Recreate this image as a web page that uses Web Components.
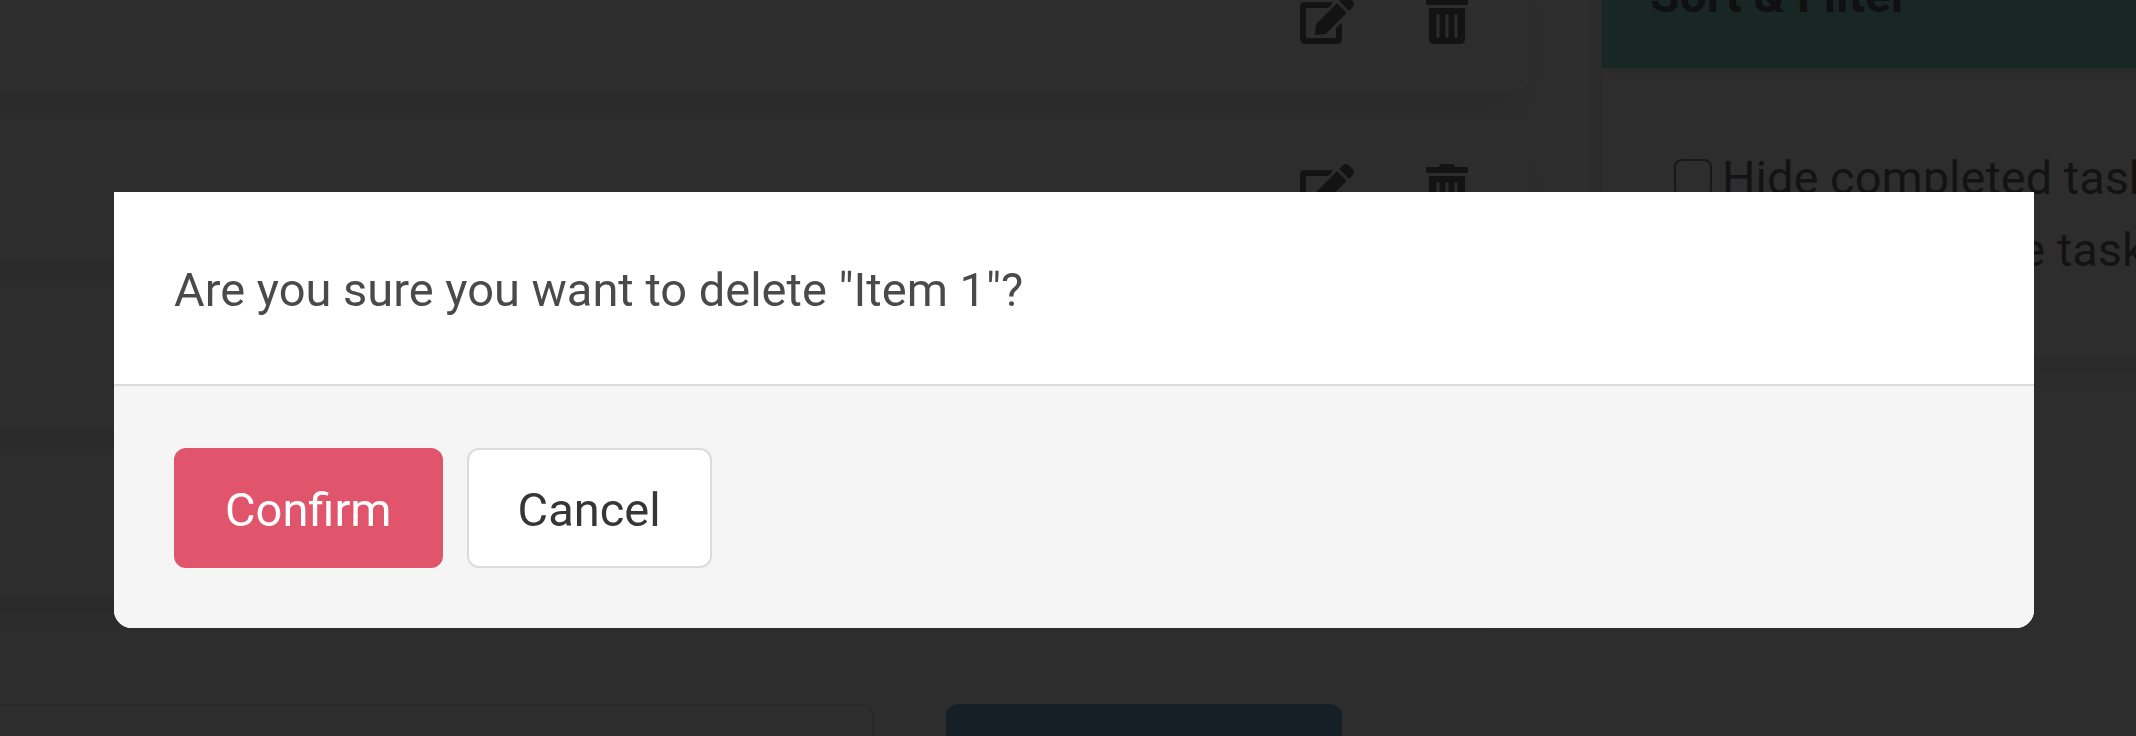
<!DOCTYPE html>
<html lang="en">
<head>
<meta charset="utf-8">
<title>Tasks</title>
<style>
  html, body { margin: 0; height: 100%; overflow: hidden; }
  body {
    font: 400 47px/72px Roboto, "Liberation Sans", sans-serif;
    color: #4a4a4a;
    background: #fff;
    --text-strong: #363636;
    --border: #dbdbdb;
    --shadow: 0 24px 48px -6px rgba(10, 10, 10, .1), 0 0 0 2px rgba(10, 10, 10, .02);
  }
</style>
</head>
<body>
<task-page>
  <task-item></task-item>
  <task-item></task-item>
  <task-item></task-item>
  <task-item></task-item>
  <task-form slot="form"></task-form>
  <filter-card slot="aside">
    <span slot="title">Sort &amp; Filter</span>
    <check-option>Hide completed tasks</check-option>
    <check-option>Show complete tasks</check-option>
  </filter-card>
</task-page>
<confirm-modal>
  <span>Are you sure you want to delete "Item 1"?</span>
  <modal-button slot="actions" kind="danger">Confirm</modal-button>
  <modal-button slot="actions">Cancel</modal-button>
</confirm-modal>

<script>
const define = (name, html) => customElements.define(name, class extends HTMLElement {
  constructor() {
    super();
    this.attachShadow({ mode: 'open' }).innerHTML = html;
  }
});

define('task-page', `
  <style>
    /* The page is scrolled: its upper and left edges lie outside the window. */
    :host {
      display: grid;
      grid-template-columns: minmax(0, 1626fr) minmax(0, 606fr);
      gap: 72px;
      align-items: start;
      margin: -52px -72px 0 -96px;
    }
    main { display: flex; flex-direction: column; gap: 24px; }
    .form { margin-top: 84px; }
  </style>
  <main>
    <slot></slot>
    <div class="form"><slot name="form"></slot></div>
  </main>
  <slot name="aside"></slot>
`);

define('task-item', `
  <style>
    :host {
      display: flex;
      justify-content: flex-end;
      gap: 48px;
      padding: 36px 47px;
      border-radius: 18px;
      background: #fff;
      box-shadow: var(--shadow);
    }
    button {
      display: flex;
      align-items: center;
      justify-content: center;
      width: 72px;
      height: 72px;
      padding: 0;
      border: 0;
      background: none;
      color: inherit;
    }
    svg { height: 48px; fill: currentColor; }
  </style>
  <button type="button" aria-label="Edit">
    <svg viewBox="0 0 576 512"><path d="M402.6 83.2l90.2 90.2c3.8 3.8 3.8 10 0 13.8L274.4 405.6l-92.8 10.3c-12.4 1.4-22.9-9.1-21.5-21.5l10.3-92.8L388.8 83.2c3.8-3.8 10-3.8 13.8 0zm162-22.9l-48.8-48.8c-15.2-15.2-39.9-15.2-55.2 0l-35.4 35.4c-3.8 3.8-3.8 10 0 13.8l90.2 90.2c3.8 3.8 10 3.8 13.8 0l35.4-35.4c15.2-15.3 15.2-40 0-55.2zM384 346.2V448H64V128h229.8c3.2 0 6.2-1.3 8.5-3.5l40-40c7.6-7.6 2.2-20.5-8.5-20.5H48C21.5 64 0 85.5 0 112v352c0 26.5 21.5 48 48 48h352c26.5 0 48-21.5 48-48V306.2c0-10.7-12.9-16-20.5-8.5l-40 40c-2.2 2.3-3.5 5.3-3.5 8.5z"/></svg>
  </button>
  <button type="button" aria-label="Delete">
    <svg viewBox="0 0 448 512"><path d="M32 464a48 48 0 0 0 48 48h288a48 48 0 0 0 48-48V128H32zm272-256a16 16 0 0 1 32 0v224a16 16 0 0 1-32 0zm-96 0a16 16 0 0 1 32 0v224a16 16 0 0 1-32 0zm-96 0a16 16 0 0 1 32 0v224a16 16 0 0 1-32 0zM432 32H312l-9.4-18.7A24 24 0 0 0 281.1 0H166.8a23.72 23.72 0 0 0-21.4 13.3L136 32H16A16 16 0 0 0 0 48v32a16 16 0 0 0 16 16h416a16 16 0 0 0 16-16V48a16 16 0 0 0-16-16z"/></svg>
  </button>
`);

define('task-form', `
  <style>
    form { display: flex; gap: 72px; padding-right: 188px; }
    input, button { box-sizing: border-box; height: 120px; border-radius: 12px; font: inherit; }
    input { flex: 1; min-width: 0; border: 2px solid var(--border); padding: 0 36px; background: #fff; }
    button { width: 396px; border: 0; background: #579ac6; }
  </style>
  <form>
    <input type="text" aria-label="New task">
    <button type="button" aria-label="Add task"></button>
  </form>
`);

define('filter-card', `
  <style>
    :host { display: block; margin-top: -40px; background: #fff; box-shadow: var(--shadow); white-space: nowrap; }
    header {
      padding: 52px 48px 36px;
      background: #6bd6b9;
      color: var(--text-strong);
      font-size: 48px;
      font-weight: 700;
      box-shadow: 0 6px 12px rgba(10, 10, 10, .1);
    }
    .options { padding: 74px 72px 70px; overflow: hidden; }
  </style>
  <header><slot name="title"></slot></header>
  <div class="options"><slot></slot></div>
`);

define('check-option', `
  <style>
    :host { display: block; }
    label { display: flex; align-items: center; gap: 10px; }
    input {
      appearance: none;
      flex: none;
      box-sizing: border-box;
      width: 38px;
      height: 38px;
      margin: 0;
      border: 2px solid #6a6a6a;
      border-radius: 8px;
      background: #fff;
    }
  </style>
  <label><input type="checkbox"><slot></slot></label>
`);

define('confirm-modal', `
  <style>
    :host {
      position: fixed;
      inset: 0;
      box-sizing: border-box;
      padding: 192px 102px 0 114px;
      background: rgba(10, 10, 10, .86);
    }
    section { border-radius: 0 0 18px 18px; overflow: hidden; background: #fff; }
    p { margin: 0; padding: 62px 60px 58px; }
    footer {
      display: flex;
      gap: 24px;
      padding: 62px 60px 60px;
      border-top: 2px solid var(--border);
      background: #f5f5f5;
    }
  </style>
  <section role="dialog" aria-modal="true" aria-label="Delete task">
    <p><slot></slot></p>
    <footer><slot name="actions"></slot></footer>
  </section>
`);

define('modal-button', `
  <style>
    :host { display: block; }
    button {
      box-sizing: border-box;
      height: 120px;
      padding: 4px 49px 0;
      border: 2px solid var(--border);
      border-radius: 12px;
      background: #fff;
      color: var(--text-strong);
      font: inherit;
    }
    :host([kind="danger"]) button { border-color: #e0556b; background: #e0556b; color: #fff; }
  </style>
  <button type="button"><slot></slot></button>
`);
</script>
</body>
</html>
